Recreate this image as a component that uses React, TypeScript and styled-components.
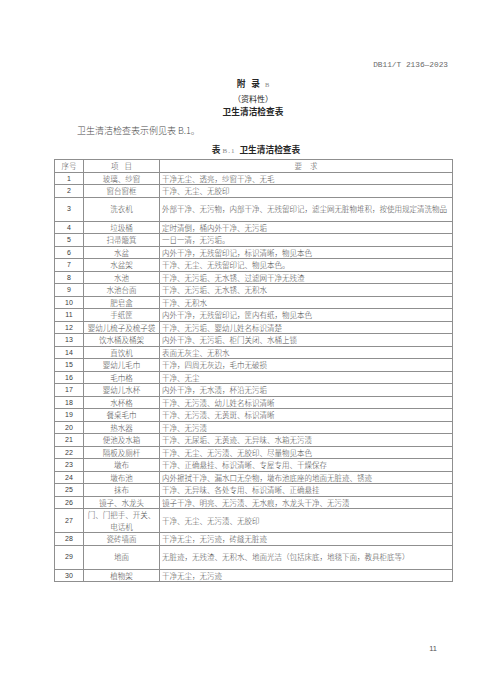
import React from 'react';
import styled, { createGlobalStyle } from 'styled-components';

const GlobalStyle = createGlobalStyle`
  html, body {
    margin: 0;
    padding: 0;
    background: #ffffff;
  }
  body {
    font-family: "Noto Sans CJK SC", "Liberation Serif", serif;
    color: #2b2b2b;
  }
`;

const Page = styled.div`
  width: 495px;
  height: 700px;
  box-sizing: border-box;
  padding: 60px 43px 46px 54px;
  display: flex;
  flex-direction: column;
  background: #ffffff;
`;

const DocCode = styled.div`
  font-family: "Liberation Mono", "DejaVu Sans Mono", monospace;
  font-size: 7.8px;
  line-height: 10px;
  text-align: right;
  padding-right: 4px;
  color: #6a6a6a;
`;

const Heading = styled.div<{ $top: number; $bold?: boolean; $size?: number }>`
  margin-top: ${(p) => p.$top}px;
  font-size: ${(p) => p.$size ?? 8.7}px;
  line-height: 12px;
  font-weight: ${(p) => (p.$bold ? 700 : 400)};
  text-align: center;
  color: #262626;
`;

const Gap = styled.span<{ $w: number }>`
  display: inline-block;
  width: ${(p) => p.$w}px;
`;

const Latin = styled.span<{ $spread?: boolean }>`
  font-family: "Liberation Serif", serif;
  font-weight: 400;
  font-size: ${(p) => (p.$spread ? 7 : 6.5)}px;
  letter-spacing: ${(p) => (p.$spread ? 1 : 0)}px;
  margin: 0 ${(p) => (p.$spread ? 2 : 0)}px;
  color: #888;
`;

const Intro = styled.p`
  margin: 7px 0 0 23px;
  font-size: 9px;
  line-height: 12px;
  font-weight: 300;
  color: #4a4a4a;
`;

const Caption = styled.div`
  margin-top: 7px;
  padding-left: 6px;
  font-size: 8.7px;
  line-height: 12px;
  font-weight: 700;
  text-align: center;
  color: #262626;
`;

const Table = styled.table`
  margin-top: 2px;
  width: 398px;
  border-collapse: collapse;
  table-layout: fixed;
  font-size: 7.5px;
  font-weight: 300;
  color: #4d4d4d;
`;

const Row = styled.tr<{ $h: number }>`
  height: ${(p) => p.$h}px;
`;

const Cell = styled.td<{ $align?: 'left' | 'center' }>`
  border: 1px solid #8f8f8f;
  padding: 0 2px;
  text-align: ${(p) => p.$align ?? 'center'};
  vertical-align: middle;
  line-height: 11.5px;
  white-space: nowrap;
  overflow: hidden;
`;

const HeadCell = styled(Cell)`
  color: #555;
`;

const Num = styled(Cell)`
  font-family: "Liberation Sans", Arial, sans-serif;
  font-weight: 400;
  font-size: 7px;
  color: #3a3a3a;
`;

const PageNumber = styled.div`
  margin-top: auto;
  padding-right: 15px;
  text-align: right;
  font-family: "Liberation Sans", Arial, sans-serif;
  font-size: 7.5px;
  line-height: 10px;
  color: #555;
`;

type Item = { name: string; req: string; tall?: boolean };

const items: Item[] = [
  { name: '玻璃、纱窗', req: '干净无尘、透亮，纱窗干净、无毛' },
  { name: '窗台窗框', req: '干净、无尘、无胶印' },
  { name: '洗衣机', req: '外部干净、无污物，内部干净、无残留印记，滤尘网无脏物堆积，按使用规定清洗物品', tall: true },
  { name: '垃圾桶', req: '定时清倒，桶内外干净、无污垢' },
  { name: '扫帚簸箕', req: '一日一清，无污垢。' },
  { name: '水盆', req: '内外干净，无残留印记，标识清晰，物见本色' },
  { name: '水盆架', req: '干净、无尘、无残留印记、物见本色。' },
  { name: '水池', req: '干净、无污垢、无水锈、过滤网干净无残渣' },
  { name: '水池台面', req: '干净、无污垢、无水锈、无积水' },
  { name: '肥皂盒', req: '干净、无积水' },
  { name: '手纸筐', req: '内外干净，无残留印记，筐内有纸，物见本色' },
  { name: '婴幼儿梳子及梳子袋', req: '干净、无污垢、婴幼儿姓名标识清楚' },
  { name: '饮水桶及桶架', req: '内外干净、无污垢、柜门关闭、水桶上锁' },
  { name: '直饮机', req: '表面无灰尘、无积水' },
  { name: '婴幼儿毛巾', req: '干净，四周无灰边，毛巾无破损' },
  { name: '毛巾格', req: '干净、无尘' },
  { name: '婴幼儿水杯', req: '内外干净，无水渍，杯沿无污垢' },
  { name: '水杯格', req: '干净、无污渍、幼儿姓名标识清晰' },
  { name: '餐桌毛巾', req: '干净、无污渍、无黄斑、标识清晰' },
  { name: '热水器', req: '干净、无污渍' },
  { name: '便池及水箱', req: '干净、无尿垢、无黄迹、无异味、水箱无污渍' },
  { name: '隔板及厕杆', req: '干净、无尘、无污渍、无胶印、尽量物见本色' },
  { name: '墩布', req: '干净、正确悬挂、标识清晰、专屋专用、干燥保存' },
  { name: '墩布池', req: '内外擦拭干净、漏水口无杂物，墩布池底座的地面无脏迹、锈迹' },
  { name: '抹布', req: '干净、无异味、各处专用、标识清晰、正确悬挂' },
  { name: '镜子、水龙头', req: '镜子干净、明亮、无污渍、无水痕，水龙头干净、无污渍' },
  { name: '门、门把手、开关、\n电话机', req: '干净、无尘、无污渍、无胶印', tall: true },
  { name: '瓷砖墙面', req: '干净无尘，无污迹，砖缝无脏迹' },
  { name: '地面', req: '无脏迹，无残渣、无积水、地面光洁（包括床底，地毯下面，教具柜底等）', tall: true },
  { name: '植物架', req: '干净无尘，无污迹' },
];

const ROW = 12.5;
const TALL = 24;

export default function App() {
  return (
    <>
      <GlobalStyle />
      <Page>
        <DocCode>DB11/T 2136—2023</DocCode>
        <Heading $top={8} $bold>
          附<Gap $w={6} />录<Gap $w={5} /><Latin>B</Latin>
        </Heading>
        <Heading $top={2} $size={8}>（资料性）</Heading>
        <Heading $top={1} $bold>卫生清洁检查表</Heading>
        <Intro>卫生清洁检查表示例见表 B.1。</Intro>
        <Caption>
          表<Latin $spread>B.1</Latin> 卫生清洁检查表
        </Caption>
        <Table>
          <colgroup>
            <col style={{ width: 29 }} />
            <col style={{ width: 76 }} />
            <col style={{ width: 293 }} />
          </colgroup>
          <thead>
            <Row $h={12}>
              <HeadCell>序号</HeadCell>
              <HeadCell>项<Gap $w={6} />目</HeadCell>
              <HeadCell>要<Gap $w={8} />求</HeadCell>
            </Row>
          </thead>
          <tbody>
            {items.map((it, i) => (
              <Row key={i} $h={it.tall ? TALL : ROW}>
                <Num>{i + 1}</Num>
                <Cell>
                  {it.name.split('\n').map((line, j) => (
                    <div key={j}>{line}</div>
                  ))}
                </Cell>
                <Cell $align="left">{it.req}</Cell>
              </Row>
            ))}
          </tbody>
        </Table>
        <PageNumber>11</PageNumber>
      </Page>
    </>
  );
}
